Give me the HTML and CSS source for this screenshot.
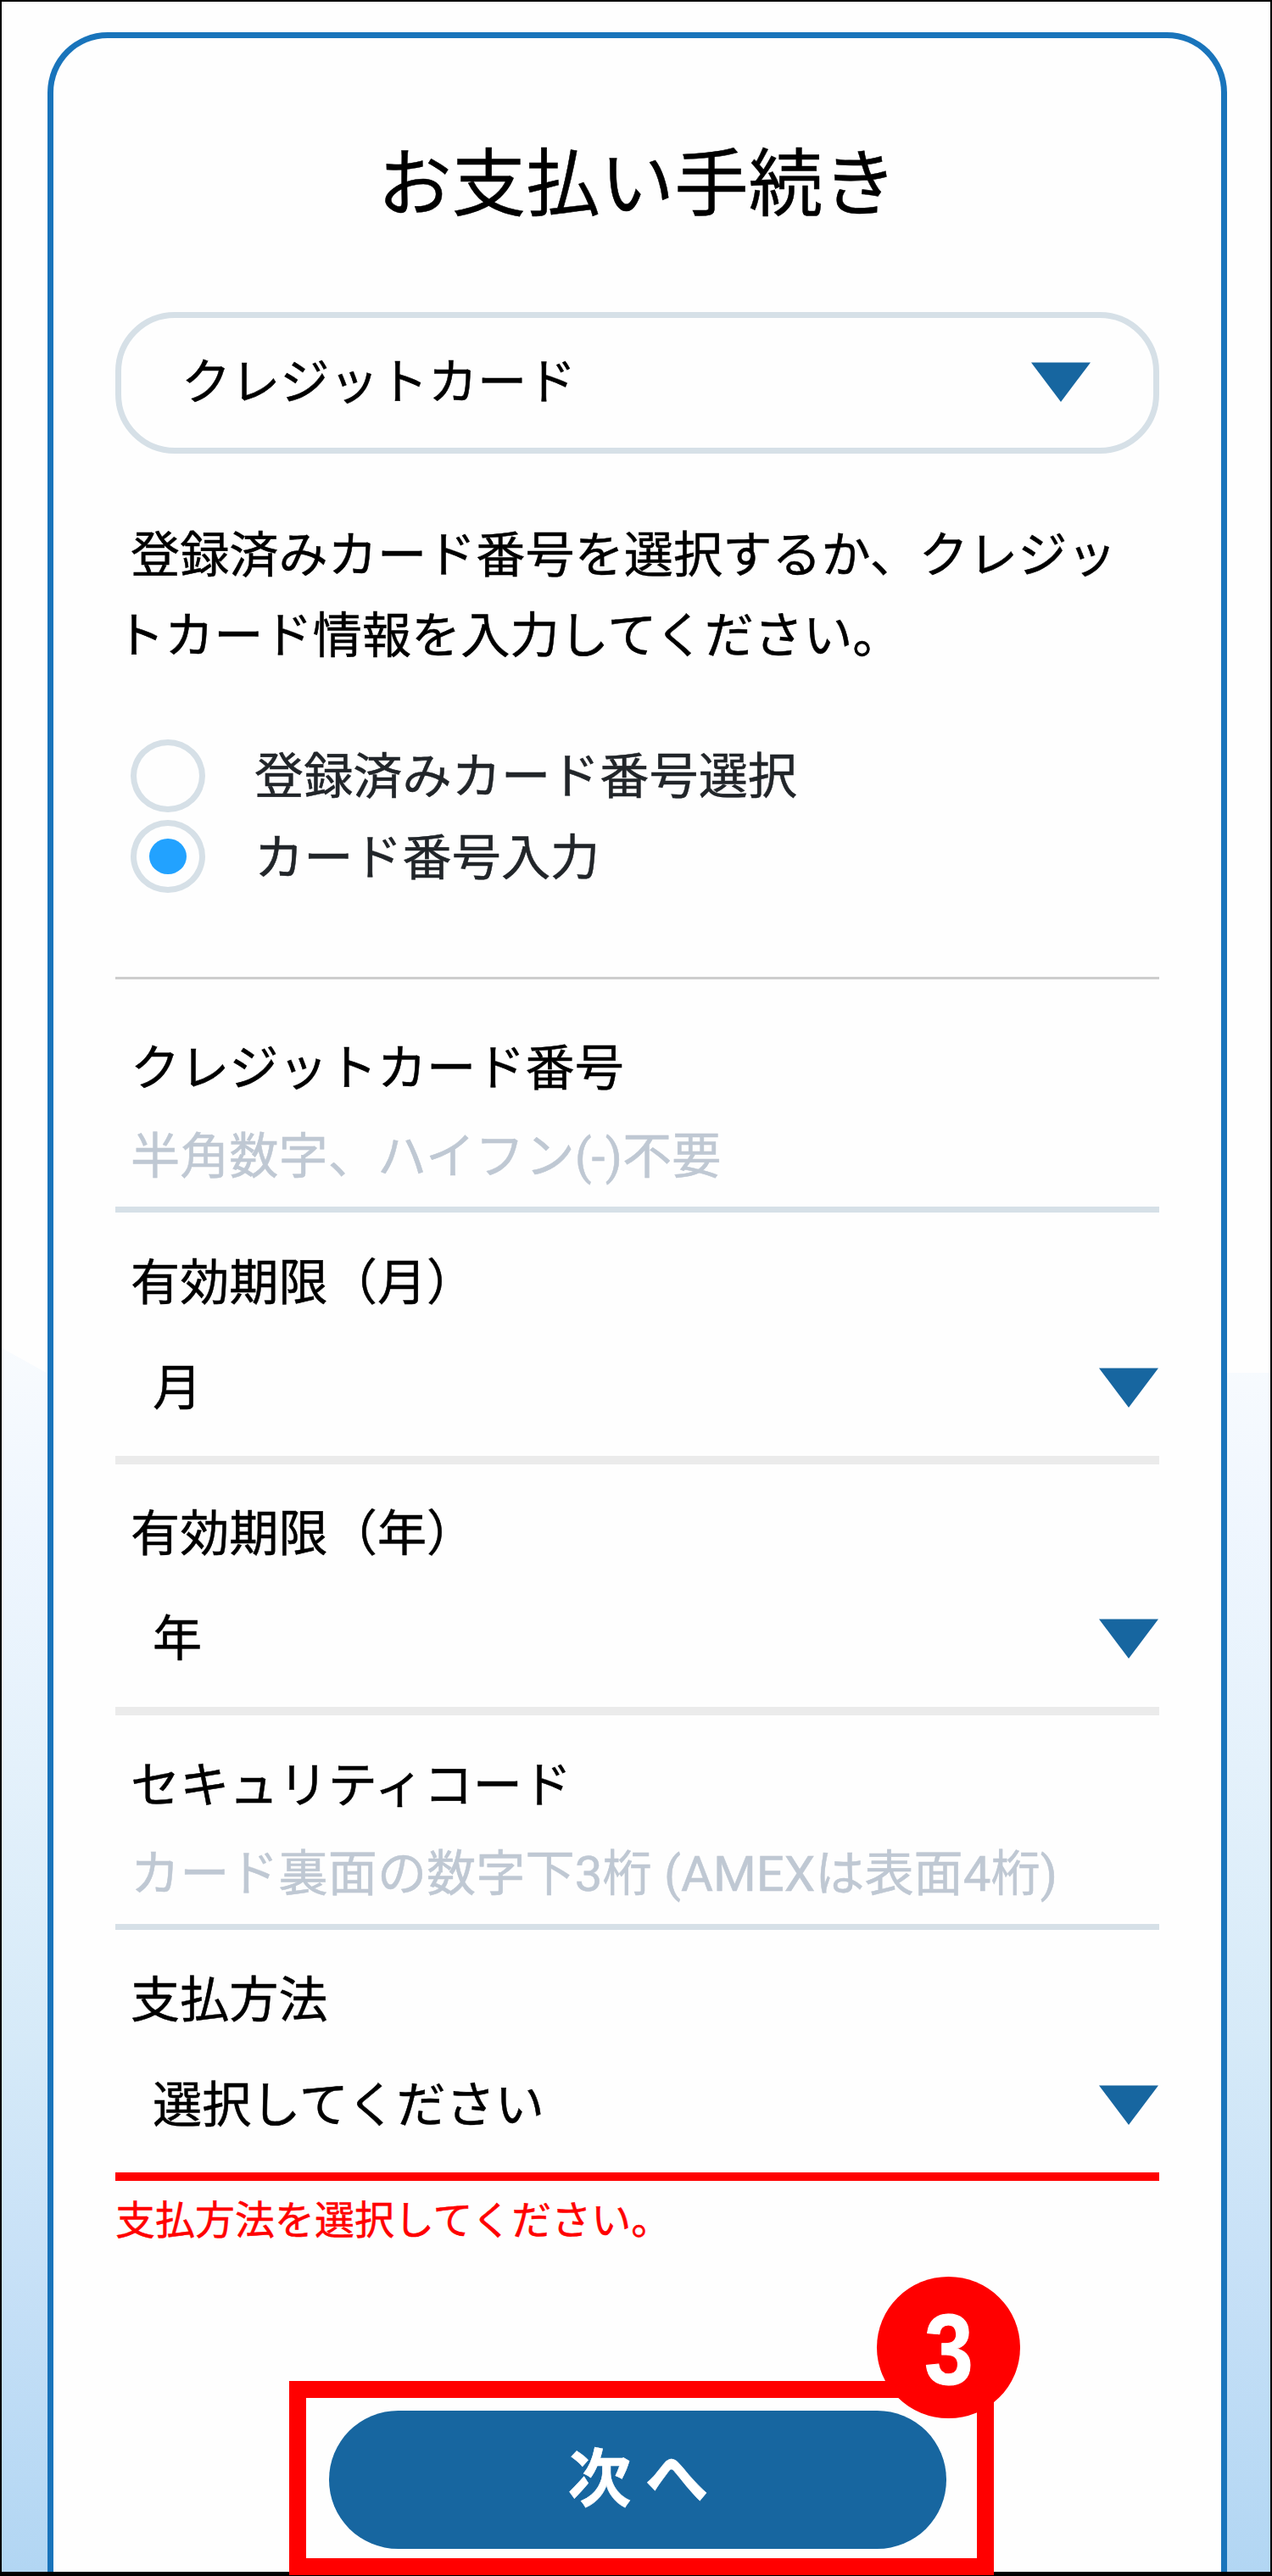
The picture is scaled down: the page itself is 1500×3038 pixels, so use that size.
FILE: index.html
```
<!DOCTYPE html>
<html lang="ja">

<head>
	<meta charset="utf-8">
	<title>お支払い手続き</title>
	<link rel="stylesheet" href="styles.css">
</head>

<body>
	<div class="page">
		<div class="card">
			<h1 class="title">お支払い手続き</h1>

			<div class="method">
				<span>クレジットカード</span>
				<svg class="arrow" viewBox="0 0 72 47" preserveAspectRatio="none"><path d="M1 0.5H71L36 47Z"/></svg>
			</div>

			<p class="lead">登録済みカード番号を選択するか、クレジットカード情報を入力してください。</p>

			<div class="radios">
				<div class="radio"><span class="circle"></span><span class="choice">登録済みカード番号選択</span></div>
				<div class="radio"><span class="circle checked"></span><span class="choice">カード番号入力</span></div>
			</div>

			<hr class="divider">

			<div class="field first">
				<div class="label">クレジットカード番号</div>
				<div class="input">半角数字、ハイフン(-)不要</div>
			</div>

			<div class="field">
				<div class="label">有効期限（月）</div>
				<div class="select">
					<span>月</span>
					<svg class="arrow" viewBox="0 0 72 47" preserveAspectRatio="none"><path d="M1 0.5H71L36 47Z"/></svg>
				</div>
			</div>

			<div class="field year">
				<div class="label">有効期限（年）</div>
				<div class="select">
					<span>年</span>
					<svg class="arrow" viewBox="0 0 72 47" preserveAspectRatio="none"><path d="M1 0.5H71L36 47Z"/></svg>
				</div>
			</div>

			<div class="field">
				<div class="label">セキュリティコード</div>
				<div class="input">カード裏面の数字下3桁 (AMEXは表面4桁)</div>
			</div>

			<div class="field">
				<div class="label">支払方法</div>
				<div class="select error">
					<span>選択してください</span>
					<svg class="arrow" viewBox="0 0 72 47" preserveAspectRatio="none"><path d="M1 0.5H71L36 47Z"/></svg>
				</div>
				<p class="message">支払方法を選択してください。</p>
			</div>

			<!-- step 3 -->
			<div class="highlight">
				<div class="button">次へ</div>
				<div class="badge"><span class="number">3</span></div>
			</div>
		</div>
	</div>
</body>

</html>
```

FILE: styles.css
```
:root {
	--blue: #1974bb;
	--darkBlue: #1766a0;
	--line: #d6e0e7;
	--red: #ff0000;
}

* {
	box-sizing: border-box;
}

body {
	margin: 0;
	font-family: Roboto, "Noto Sans CJK JP", sans-serif;
	font-size: 58.2px;
	line-height: 80px;
	color: #000;
	-webkit-text-stroke: 0.5px;
}

.page {
	width: 1500px;
	height: 3038px;
	padding: 36px 51px 0 54px;
	border: 2px solid #000;
	border-bottom-width: 5px;
	background:
		linear-gradient(to top right, transparent 50%, #fefefe 51%) 0 1588px / 54px 30px no-repeat,
		linear-gradient(#fefefe 1588px, transparent 1588px) 0 0 / 54px 100% no-repeat,
		linear-gradient(#fefefe 1617px, transparent 1617px) 100% 0 / 1442px 100% no-repeat,
		linear-gradient(#f8fbfe 1588px, #eff6fe 1800px, #e4f1fb 2080px, #d6eaf8 2400px, #c8e1f7 2660px, #b2d6f3 3031px);
}

.card {
	height: 2995px;
	padding: 123px 73px 0;
	border: 7px solid var(--blue);
	border-bottom: none;
	border-radius: 71px 71px 0 0;
	background: #fefefe;
}

.title {
	margin: 0;
	font-size: 87.5px;
	font-weight: 400;
	line-height: 100px;
	text-align: center;
}

.method {
	display: flex;
	align-items: center;
	justify-content: space-between;
	height: 167px;
	margin-top: 100px;
	padding: 0 73px 2px 71px;
	border: 7px solid var(--line);
	border-radius: 70px;
}

.arrow {
	width: 72px;
	height: 47px;
	fill: var(--darkBlue);
}

.lead {
	margin: 73px 0 0;
	line-height: 95px;
	text-indent: 18px;
}

.radios {
	margin-top: 69px;
	padding-left: 18px;
	color: #212529;
}

.radio {
	display: flex;
	align-items: center;
	gap: 58px;
	height: 95.5px;
}

.choice {
	padding-top: 3px;
}

.circle {
	display: flex;
	align-items: center;
	justify-content: center;
	width: 88px;
	height: 86px;
	border: 7px solid var(--line);
	border-radius: 50%;
}

.checked::after {
	content: "";
	width: 44px;
	height: 42px;
	border-radius: 50%;
	background: #22a2ff;
}

.divider {
	height: 3px;
	margin: 94px 0 0;
	border: none;
	background: #cdcdcd;
}

.field {
	margin-top: 43px;
}

.first {
	margin-top: 65px;
}

.year {
	margin-top: 42px;
}

.label {
	padding-left: 18px;
}

.input {
	display: flex;
	align-items: center;
	height: 130px;
	padding: 5px 0 0 18px;
	border-bottom: 7px solid var(--line);
	color: #bfc8d3;
	white-space: pre;
}

.select {
	display: flex;
	align-items: center;
	justify-content: space-between;
	height: 174px;
	padding: 4px 0 0 44px;
	border-bottom: 10px solid #ebebeb;
}

.select .arrow {
	margin-top: -2px;
}

.error {
	height: 173px;
	border-color: var(--red);
}

.error .arrow {
	margin-top: 0;
}

.message {
	margin: 17px 0 0;
	font-size: 47px;
	line-height: 60px;
	color: var(--red);
}

.highlight {
	position: relative;
	width: 831px;
	height: 229px;
	margin: 159px 0 0 205px;
	padding: 15px 0 0 27px;
	border: 20px solid var(--red);
}

.button {
	width: 728px;
	height: 163px;
	border-radius: 82px;
	background: var(--darkBlue);
	color: #fff;
	font-size: 75px;
	font-weight: 700;
	line-height: 162px;
	letter-spacing: 16px;
	text-indent: 17px;
	text-align: center;
}

.badge {
	position: absolute;
	left: 673px;
	top: -143px;
	width: 169px;
	height: 167px;
	border-radius: 50%;
	background: var(--red);
	color: #fff;
	font-family: "Liberation Sans", sans-serif;
	font-size: 118px;
	font-weight: 700;
	line-height: 172px;
	text-align: center;
}

.number {
	display: inline-block;
	transform: scaleX(0.88);
	-webkit-text-stroke: 1px #fff;
}
```
